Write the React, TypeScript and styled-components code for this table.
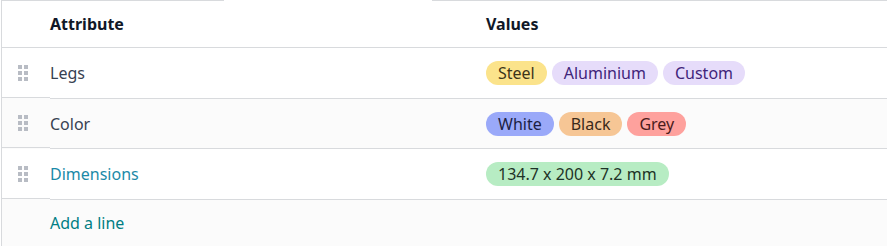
import React from "react";
import styled, { createGlobalStyle } from "styled-components";

const Global = createGlobalStyle`
  html, body { margin: 0; padding: 0; background: #ffffff; }
  body { font-family: "Noto Sans", "DejaVu Sans", sans-serif; font-size: 16px; color: #374151; }
`;

const Frame = styled.div`
  width: 886px;
  margin-left: 1px;
  border-left: 1px solid #d8dadd;
  height: 246px;
  background: #fbfbfb;
  box-sizing: border-box;
`;

const TabEdge = styled.div`
  display: flex;
  height: 1px;
  background: #ffffff;
`;

const EdgeSegment = styled.div<{ $w?: number; $line?: boolean }>`
  flex: ${(p) => (p.$w ? `0 0 ${p.$w}px` : "1 1 auto")};
  background: ${(p) => (p.$line ? "#d8dadd" : "#ffffff")};
`;

const Table = styled.div`
  display: grid;
  grid-template-columns: 48px 436px 1fr;
`;

const Row = styled.div<{ $striped?: boolean; $height: number }>`
  display: contents;
  & > div {
    height: ${(p) => p.$height}px;
    background: ${(p) => (p.$striped ? "#fbfbfb" : "#ffffff")};
    border-bottom: 1px solid #d8dadd;
  }
`;

const FooterRow = styled.div`
  display: contents;
  & > div {
    height: 46px;
    background: #fbfbfb;
  }
`;

const Cell = styled.div`
  display: flex;
  align-items: center;
  box-sizing: content-box;
  min-width: 0;
`;

const HandleCell = styled(Cell)`
  justify-content: flex-start;
  padding-left: 16px;
  box-sizing: border-box;
`;

const HeadText = styled.span`
  font-weight: 700;
  color: #111827;
  font-size: 16px;
`;

const Name = styled.span<{ $link?: boolean }>`
  color: ${(p) => (p.$link ? "#1b8aa8" : "#374151")};
  font-size: 16px;
`;

const AddLink = styled.span`
  color: #017e84;
  font-size: 16px;
`;

const Tags = styled.div`
  display: flex;
  gap: 5px;
`;

const Tag = styled.span<{ $bg: string; $fg: string }>`
  display: inline-flex;
  align-items: center;
  height: 24px;
  padding: 0 12px;
  border-radius: 12px;
  background: ${(p) => p.$bg};
  color: ${(p) => p.$fg};
  font-size: 16px;
  white-space: nowrap;
`;

const Grip = () => (
  <svg width="11" height="16" viewBox="0 0 11 16" aria-hidden>
    {[0, 6, 12].map((y) =>
      [0, 6].map((x) => (
        <rect key={`${x}-${y}`} x={x} y={y} width="4" height="4" fill="#b8bcc4" />
      ))
    )}
  </svg>
);

type TagDef = { label: string; bg: string; fg: string };

const rows: { name: string; link?: boolean; striped?: boolean; height: number; tags: TagDef[] }[] = [
  {
    name: "Legs",
    height: 50,
    tags: [
      { label: "Steel", bg: "#fbe38b", fg: "#3d3519" },
      { label: "Aluminium", bg: "#e6dcfa", fg: "#41257a" },
      { label: "Custom", bg: "#e6dcfa", fg: "#41257a" },
    ],
  },
  {
    name: "Color",
    striped: true,
    height: 49,
    tags: [
      { label: "White", bg: "#9aa9f9", fg: "#1c1f44" },
      { label: "Black", bg: "#f6c695", fg: "#3b2a1a" },
      { label: "Grey", bg: "#fea19d", fg: "#4a1b1b" },
    ],
  },
  {
    name: "Dimensions",
    link: true,
    height: 50,
    tags: [{ label: "134.7 x 200 x 7.2 mm", bg: "#b7ecc3", fg: "#1e3327" }],
  },
];

export default function App() {
  return (
    <>
      <Global />
      <Frame>
        <TabEdge>
          <EdgeSegment $w={222} $line />
          <EdgeSegment $w={208} />
          <EdgeSegment $line />
        </TabEdge>
        <Table>
          <Row $height={46}>
            <Cell />
            <Cell>
              <HeadText>Attribute</HeadText>
            </Cell>
            <Cell>
              <HeadText>Values</HeadText>
            </Cell>
          </Row>
          {rows.map((r) => (
            <Row key={r.name} $height={r.height} $striped={r.striped}>
              <HandleCell>
                <Grip />
              </HandleCell>
              <Cell>
                <Name $link={r.link}>{r.name}</Name>
              </Cell>
              <Cell>
                <Tags>
                  {r.tags.map((t) => (
                    <Tag key={t.label} $bg={t.bg} $fg={t.fg}>
                      {t.label}
                    </Tag>
                  ))}
                </Tags>
              </Cell>
            </Row>
          ))}
          <FooterRow>
            <Cell />
            <Cell>
              <AddLink>Add a line</AddLink>
            </Cell>
            <Cell />
          </FooterRow>
        </Table>
      </Frame>
    </>
  );
}
